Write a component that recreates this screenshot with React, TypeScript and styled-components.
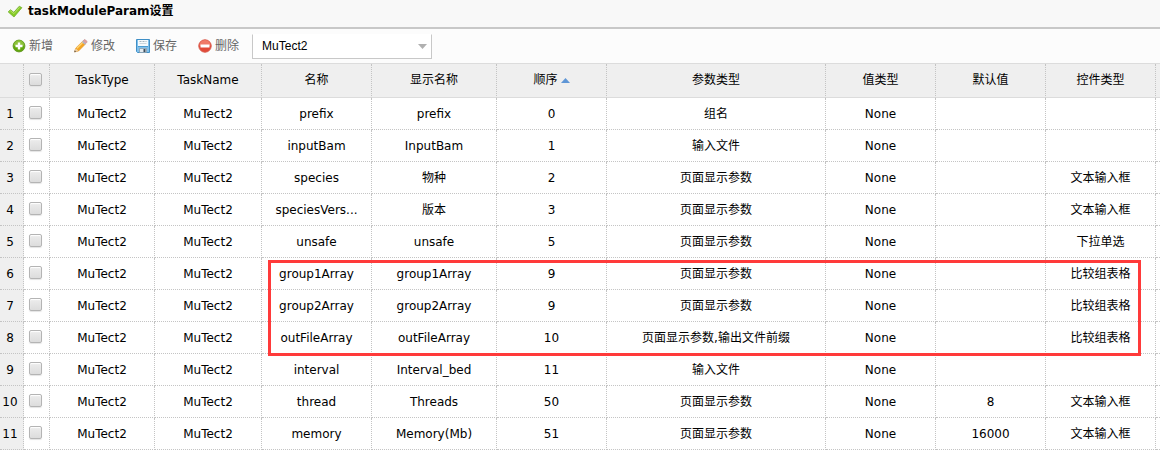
import React from "react";
import styled, { createGlobalStyle } from "styled-components";

const GlobalStyle = createGlobalStyle`
  *, *::before, *::after { box-sizing: border-box; }
  body {
    margin: 0;
    background: #fff;
    color: #000;
    font: 12px/16px "DejaVu Sans", "Noto Sans CJK SC", sans-serif;
  }
`;

const Page = styled.main`
  width: 100%;
`;

const TitleBar = styled.header`
  display: flex;
  align-items: center;
  gap: 5px;
  height: 29px;
  padding: 0 7px 6px;
  background: #f8f8f8;
  border-bottom: 2px solid #c8c8c8;
`;

const Title = styled.h1`
  margin: 0;
  font-size: 12px;
  line-height: 16px;
  font-weight: 700;
`;

const Toolbar = styled.div`
  display: flex;
  align-items: center;
  height: 34px;
  padding-left: 11px;
  gap: 20px;
  background: #fcfcfc;
`;

const ToolButton = styled.button`
  display: flex;
  align-items: center;
  gap: 2px;
  padding: 0;
  border: 0;
  background: none;
  color: #666;
  font: inherit;
  cursor: pointer;
`;

const SelectBox = styled.div`
  position: relative;
  width: 180px;
  margin-left: -7px;
`;

const Select = styled.select`
  appearance: none;
  display: block;
  width: 100%;
  height: 25px;
  padding: 0 24px 0 9px;
  border: 1px solid #c8c8c8;
  border-top-color: #fff;
  border-radius: 0;
  background: #fff;
  color: #000;
  font: 12px "Liberation Sans", "Noto Sans CJK SC", sans-serif;
`;

const SelectArrow = styled.svg`
  position: absolute;
  right: 5px;
  top: 10px;
  pointer-events: none;
`;

const GridWrap = styled.section`
  position: relative;
  overflow: hidden;
`;

const Grid = styled.table`
  width: 100%;
  table-layout: fixed;
  border-collapse: separate;
  border-spacing: 0;
  border-top: 1px solid #dcdcdc;
`;

const Col = styled.col<{ $w?: number }>`
  width: ${(p) => (p.$w ? `${p.$w}px` : "auto")};
`;

const HeadCell = styled.th`
  height: 34px;
  padding: 0 0 2px;
  background: #efefef;
  border-right: 1px dotted #c4c4c4;
  border-bottom: 1px solid #dcdcdc;
  font-weight: 400;
  text-align: center;
  white-space: nowrap;
  &:last-child { border-right: 0; }
`;

const Cell = styled.td<{ $shade?: boolean }>`
  height: 32px;
  padding: 0 4px;
  background: ${(p) => (p.$shade ? "#efefef" : "#fff")};
  border-right: 1px dotted #c4c4c4;
  border-bottom: 1px dotted #c4c4c4;
  text-align: center;
  white-space: nowrap;
  overflow: hidden;
  text-overflow: ellipsis;
  &:last-child { border-right: 0; }
`;

const IndexCell = styled(Cell).attrs({ as: "th", scope: "row", $shade: true })`
  padding: 0 3px 0 0;
  font-weight: 400;
  text-overflow: clip;
`;

const CheckCell = styled(Cell)`
  padding: 0 2px 2px 0;
  overflow: visible;
`;

const CheckHead = styled(HeadCell)`
  padding-right: 2px;
`;

const Check = styled.input.attrs({ type: "checkbox" })`
  appearance: none;
  display: block;
  width: 13px;
  height: 13px;
  margin: 0 auto;
  border: 1px solid #b4b4b4;
  border-radius: 2px;
  background: linear-gradient(#ededed, #dcdcdc);
  box-shadow: inset 0 1px 1px #fff, 0 1px 1px #e4e4e4;
  &:checked { background: #8fb4dc; }
`;

const SortArrow = styled.svg`
  margin-left: 3px;
  vertical-align: 1px;
`;

const Highlight = styled.div`
  position: absolute;
  left: 268px;
  top: 197px;
  width: 873px;
  height: 96px;
  border: 3px solid #ff3a3a;
  pointer-events: none;
`;

const TickIcon = () => (
  <svg width="16" height="16" viewBox="0 0 16 16" aria-hidden="true">
    <path d="M1.200 8.900 3.400 6.700l3.400 2.600 5.500-6.100 2.600 1.500-7.900 9.300z" fill="#85cb25" stroke="#74b030" strokeWidth=".8" strokeLinejoin="round" />
    <path d="m2.600 8.700.9-.8 3.400 2.700 5.700-6.200" fill="none" stroke="#b5e265" />
  </svg>
);

const AddIcon = () => (
  <svg width="16" height="16" viewBox="0 0 16 16" aria-hidden="true">
    <circle cx="8" cy="8" r="5.900" fill="#63a80c" stroke="#669c28" />
    <path d="M2.800 7.500a5.200 5.200 0 0 1 10.400 0c-3 1.400-7.400 1.400-10.400 0z" fill="#8cc238" />
    <path d="M8 4.500v7M4.500 8h7" stroke="#fff" strokeWidth="2.400" />
  </svg>
);

const EditIcon = () => (
  <svg width="16" height="16" viewBox="0 0 16 16" aria-hidden="true">
    <path d="m1.500 14 1.300-4 6.700-6.600 2.800 2.800L5.600 13z" fill="#f5a623" stroke="#dd8f2a" strokeWidth=".6" />
    <path d="m3.900 10.300 6.400-6.400" stroke="#ffd777" strokeWidth="1.300" />
    <path d="m9.900 3 1.200-1.200q.7-.5 1.400.1l1.300 1.300q.5.700-.1 1.400L12.500 5.800z" fill="#dfa0a2" stroke="#b98484" strokeWidth=".6" />
    <path d="m9 4 2.800 2.800 1.100-1.100-2.800-2.800z" fill="#aeb5ce" />
    <path d="m1.500 14 1.200-3.700L5.300 13z" fill="#ecd0a8" />
    <path d="m1.200 14.300.6-2 1.400 1.400z" fill="#655a50" />
  </svg>
);

const SaveIcon = () => (
  <svg width="16" height="16" viewBox="0 0 16 16" aria-hidden="true">
    <path d="M1.500 1.500h13v13h-12l-1-1z" fill="#7fc0ec" stroke="#3f8fc6" />
    <path d="M3 2h10v6H3z" fill="#f5fafd" />
    <path d="M4.500 3.500h7" stroke="#a5b4bd" strokeDasharray="2 1" />
    <path d="M4.500 5.500h7" stroke="#ccd7de" />
    <path d="M3 8.500h10" stroke="#4b9bd0" />
    <path d="M4.500 10.500h7v4h-7z" fill="#e3eaef" stroke="#8296a5" strokeWidth=".7" />
    <path d="M8.500 11h2v3h-2z" fill="#3c4d5b" />
  </svg>
);

const DeleteIcon = () => (
  <svg width="16" height="16" viewBox="0 0 16 16" aria-hidden="true">
    <circle cx="8" cy="8" r="6.200" fill="#e24a38" stroke="#d9594a" />
    <path d="M2.500 7.500a5.500 5.500 0 0 1 11 0c-3 1.300-8 1.300-11 0z" fill="#f07a68" />
    <path d="M3.500 6.500h9v3h-9z" fill="#fff" />
  </svg>
);

const tools = [
  { label: "新增", Icon: AddIcon },
  { label: "修改", Icon: EditIcon },
  { label: "保存", Icon: SaveIcon },
  { label: "删除", Icon: DeleteIcon },
];

const columnWidths = [24, 26, 105, 107, 110, 125, 110, 219, 110, 110, 110];
const headings = ["TaskType", "TaskName", "名称", "显示名称", "顺序", "参数类型", "值类型", "默认值", "控件类型"];

const PAGE_PARAM = "页面显示参数";
const rows = [
  ["prefix", "prefix", "0", "组名", "", ""],
  ["inputBam", "InputBam", "1", "输入文件", "", ""],
  ["species", "物种", "2", PAGE_PARAM, "", "文本输入框"],
  ["speciesVers...", "版本", "3", PAGE_PARAM, "", "文本输入框"],
  ["unsafe", "unsafe", "5", PAGE_PARAM, "", "下拉单选"],
  ["group1Array", "group1Array", "9", PAGE_PARAM, "", "比较组表格"],
  ["group2Array", "group2Array", "9", PAGE_PARAM, "", "比较组表格"],
  ["outFileArray", "outFileArray", "10", "页面显示参数,输出文件前缀", "", "比较组表格"],
  ["interval", "Interval_bed", "11", "输入文件", "", ""],
  ["thread", "Threads", "50", PAGE_PARAM, "8", "文本输入框"],
  ["memory", "Memory(Mb)", "51", PAGE_PARAM, "16000", "文本输入框"],
];

export default function App() {
  return (
    <Page>
      <GlobalStyle />
      <TitleBar>
        <TickIcon />
        <Title>taskModuleParam设置</Title>
      </TitleBar>
      <Toolbar>
        {tools.map(({ label, Icon }) => (
          <ToolButton type="button" key={label}>
            <Icon />
            {label}
          </ToolButton>
        ))}
        <SelectBox>
          <Select aria-label="TaskType" defaultValue="MuTect2">
            <option>MuTect2</option>
          </Select>
          <SelectArrow width="9" height="5" viewBox="0 0 9 5" aria-hidden="true">
            <path d="M0 0h9L4.500 5z" fill="#b0b0b0" />
          </SelectArrow>
        </SelectBox>
      </Toolbar>
      <GridWrap>
        <Grid>
          <colgroup>
            {columnWidths.map((w, i) => (
              <Col key={i} $w={w} />
            ))}
            <Col />
          </colgroup>
          <thead>
            <tr>
              <HeadCell />
              <CheckHead>
                <Check aria-label="全选" />
              </CheckHead>
              {headings.map((h) => (
                <HeadCell key={h} scope="col">
                  {h}
                  {h === "顺序" && (
                    <SortArrow width="9" height="5" viewBox="0 0 9 5" aria-hidden="true">
                      <path d="M0 5h9L4.500 0z" fill="#5f96d6" />
                    </SortArrow>
                  )}
                </HeadCell>
              ))}
              <HeadCell />
            </tr>
          </thead>
          <tbody>
            {rows.map(([name, shown, order, kind, preset, control], i) => (
              <tr key={name}>
                <IndexCell>{i + 1}</IndexCell>
                <CheckCell>
                  <Check aria-label={name} />
                </CheckCell>
                <Cell>MuTect2</Cell>
                <Cell>MuTect2</Cell>
                <Cell>{name}</Cell>
                <Cell>{shown}</Cell>
                <Cell>{order}</Cell>
                <Cell>{kind}</Cell>
                <Cell>None</Cell>
                <Cell>{preset}</Cell>
                <Cell>{control}</Cell>
                <Cell />
              </tr>
            ))}
          </tbody>
        </Grid>
        <Highlight />
      </GridWrap>
    </Page>
  );
}
